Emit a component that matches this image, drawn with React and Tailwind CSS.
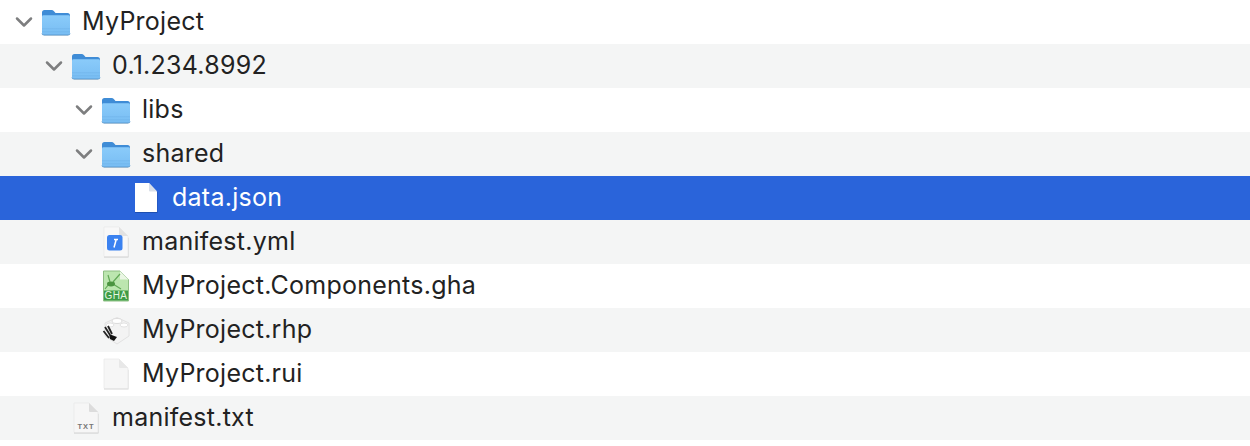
import React from 'react';

const Chevron = () => (
    <svg width="18" height="12" viewBox="0 0 18 12" className="shrink-0">
        <path d="M2 2.5 L9 9.5 L16 2.5" fill="none" stroke="#7d7e7f" strokeWidth="2.5" strokeLinecap="round" strokeLinejoin="round" />
    </svg>
);

const FolderIcon = () => (
    <svg width="30" height="28" viewBox="0 0 30 28">
        <defs>
            <linearGradient id="folderBody" x1="0" y1="0" x2="0" y2="1">
                <stop offset="0" stopColor="#8acbfa" />
                <stop offset="1" stopColor="#78bdf3" />
            </linearGradient>
        </defs>
        <path d="M1 4.5 Q1 2 3.5 2 H10.5 Q12 2 13 3.2 L14.5 5 H26.5 Q29 5 29 7.5 V12 H1 Z" fill="#3f8cd6" />
        <path d="M1 8.5 Q1 7.2 2.5 7.2 H27.5 Q29 7.2 29 8.5 V25 Q29 27 27 27 H3 Q1 27 1 25 Z" fill="url(#folderBody)" />
        <rect x="1" y="20.5" width="28" height="0.7" fill="#70b3e9" />
        <rect x="1" y="23.5" width="28" height="0.7" fill="#70b3e9" />
        <path d="M1 25.5 Q1 27 3 27 H27 Q29 27 29 25.5" fill="none" stroke="#5a9bd2" strokeWidth="1" />
        <path d="M3 27.8 H27" stroke="#00000020" strokeWidth="0.8" />
    </svg>
);

const Page = ({ fill = '#f8f8f8', fold = '#e2e2e2', children }) => (
    <svg width="28" height="32" viewBox="0 0 28 32">
        <path d="M2 2.5 H17 L26.5 12 V31.5 H2 Z" fill="#0000002b" />
        <path d="M2 1 H17 L26 10 V30 Q26 30.5 25.5 30.5 H2.5 Q2 30.5 2 30 Z" fill={fill} stroke="#e6e6e6" strokeWidth="0.6" />
        <path d="M17 1 L26 10 H18 Q17 10 17 9 Z" fill={fold} />
        {children}
    </svg>
);

const WhitePage = () => (
    <svg width="28" height="32" viewBox="0 0 28 32">
        <path d="M3 2 H17 L25.5 10.5 V31 H3 Z" fill="#1d4fb0" />
        <path d="M3 1 H17 L25 9.5 V29.5 Q25 30 24.5 30 H3.5 Q3 30 3 29.5 Z" fill="#ffffff" />
        <path d="M17 1 L25 9.5 H18 Q17 9.5 17 8.5 Z" fill="#d9dfe9" />
    </svg>
);

const YmlIcon = () => (
    <Page>
        <rect x="5" y="9" width="15.5" height="15.5" rx="2.5" fill="#3b82f0" />
        <path d="M12 13.5 H16 M14.2 13.5 L12 21.5" stroke="#fff" strokeWidth="1.5" fill="none" />
    </Page>
);

const GhaIcon = () => (
    <svg width="28" height="32" viewBox="0 0 28 32">
        <path d="M1.5 1 H18 L26.5 9.5 V31 H1.5 Z" fill="#bce6af" stroke="#8dbd82" strokeWidth="1" />
        <path d="M18 1 L26.5 9.5 H18 Z" fill="#eaf6e4" />
        <path d="M3 19 L7 14 M11 12 L18 4 M11 14 L19 19 M8 12 L6 5" fill="none" stroke="#62a956" strokeWidth="1.2" />
        <ellipse cx="9" cy="14" rx="4" ry="2.4" fill="#4b9440" />
        <rect x="2" y="20.5" width="24" height="10" fill="#3d9b46" />
        <text x="14" y="29" textAnchor="middle" fontSize="10" letterSpacing="0.4" fill="#e4f5e0" fontFamily="Liberation Sans, sans-serif">GHA</text>
    </svg>
);

const RhpIcon = () => (
    <svg width="28" height="32" viewBox="0 0 28 32">
        <path d="M15 3.5 L27 9 V22 L15 30 L3 22 V9 Z" fill="#f3f3f3" stroke="#e2e2e2" strokeWidth="1" />
        <ellipse cx="15" cy="7" rx="5" ry="2.5" fill="#fff" stroke="#dcdcdc" />
        <ellipse cx="8" cy="11" rx="4" ry="2" fill="#fff" stroke="#e2e2e2" />
        <ellipse cx="22" cy="11" rx="4" ry="2" fill="#fff" stroke="#e2e2e2" />
        <path d="M3 13 L8 21 M1.5 17 L7 24 M6 12 L10 20" stroke="#222" strokeWidth="1.8" fill="none" />
        <path d="M7 20 L15 23 L12 27 L8 25 Z" fill="#111" />
    </svg>
);

const BlankIcon = () => <Page fill="#f6f6f6" fold="#e8e8e8" />;

const TxtIcon = () => (
    <Page fill="#f6f6f6" fold="#dcdcdc">
        <text x="14" y="27" textAnchor="middle" fontSize="7.5" fontWeight="700" fill="#777" letterSpacing="0.9" fontFamily="Liberation Sans, sans-serif">TXT</text>
    </Page>
);

const rows = [
    { name: 'MyProject', level: 0, open: true, icon: FolderIcon },
    { name: '0.1.234.8992', level: 1, open: true, icon: FolderIcon },
    { name: 'libs', level: 2, open: true, icon: FolderIcon },
    { name: 'shared', level: 2, open: true, icon: FolderIcon },
    { name: 'data.json', level: 3, selected: true, icon: WhitePage },
    { name: 'manifest.yml', level: 2, icon: YmlIcon },
    { name: 'MyProject.Components.gha', level: 2, icon: GhaIcon },
    { name: 'MyProject.rhp', level: 2, icon: RhpIcon },
    { name: 'MyProject.rui', level: 2, icon: BlankIcon },
    { name: 'manifest.txt', level: 1, icon: TxtIcon },
];

const indents = ['pl-[16px]', 'pl-[46px]', 'pl-[76px]', 'pl-[106px]'];

const Row = ({ row, index }) => {
    const Icon = row.icon;
    let bg = index % 2 === 1 ? 'bg-[#f4f5f5]' : 'bg-white';
    if (row.selected) bg = 'bg-[#2a64da]';

    return (
        <div className={`flex h-11 items-center ${bg} ${indents[row.level]}`}>
            <div className="flex w-[16px] shrink-0 items-center justify-center">
                {row.open && <Chevron />}
            </div>
            <div className="ml-[9px] flex w-[30px] shrink-0 items-center justify-center">
                <Icon />
            </div>
            <span className={`mb-[2px] ml-[11px] text-[25px] leading-none tracking-[0.25px] ${row.selected ? 'text-white' : 'text-[#222222]'}`}>
                {row.name}
            </span>
        </div>
    );
};

export default function App() {
    return (
        <div className="h-[446px] w-[1250px] overflow-hidden bg-white font-['Inter',sans-serif]">
            {rows.map((row, i) => (
                <Row key={row.name} row={row} index={i} />
            ))}
        </div>
    );
}
